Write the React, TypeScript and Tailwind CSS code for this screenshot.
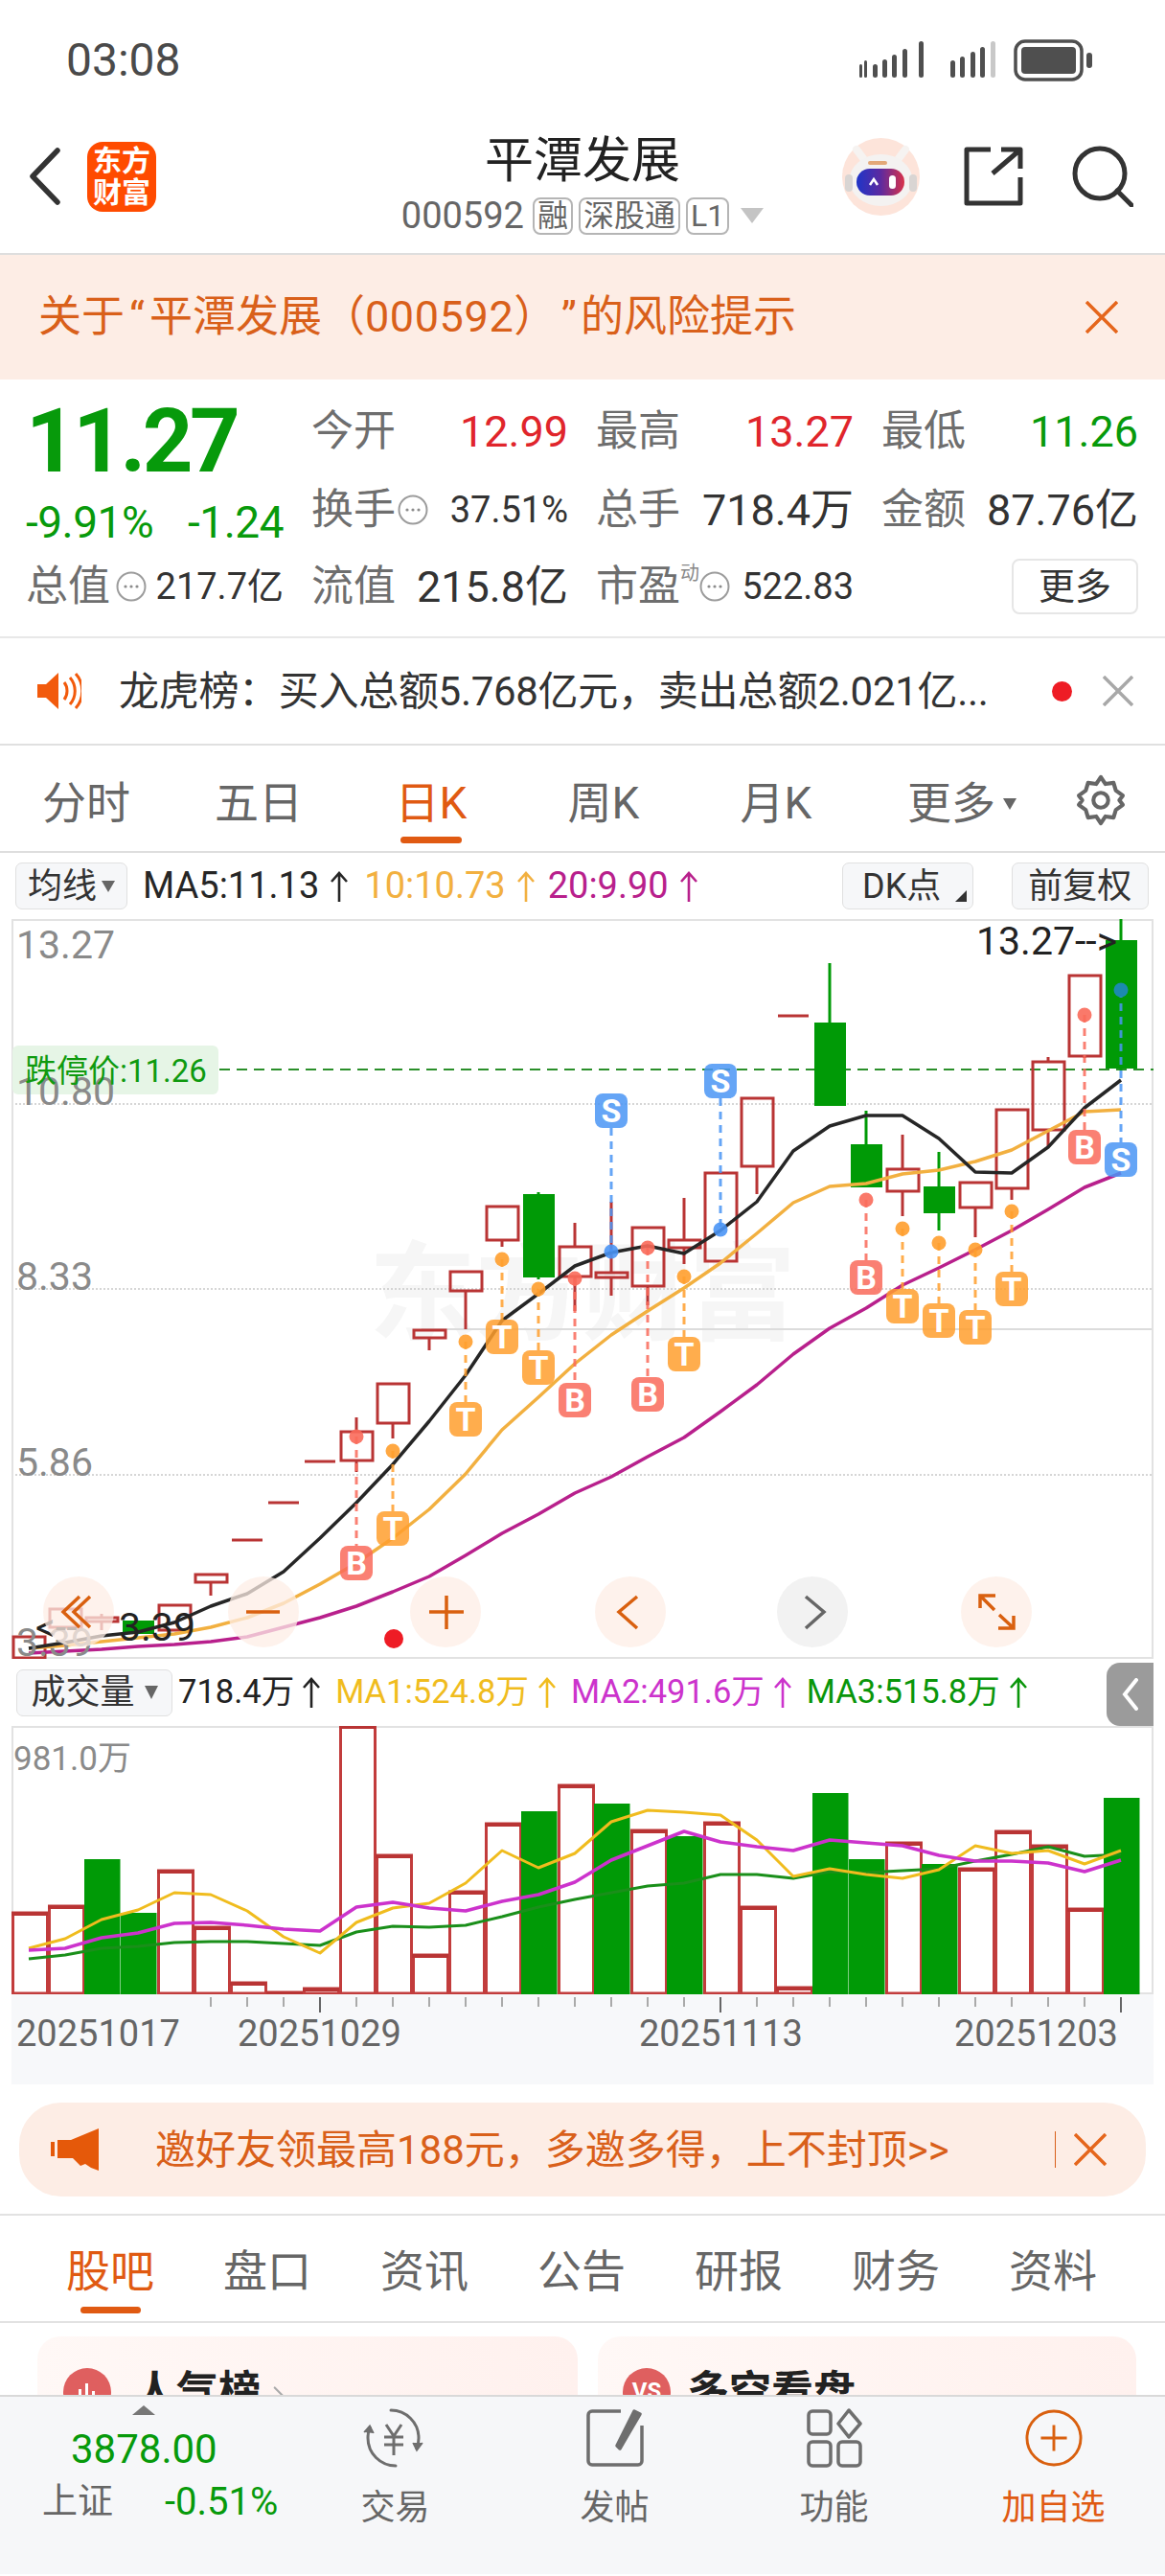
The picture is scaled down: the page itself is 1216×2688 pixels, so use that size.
import { ChevronRight } from 'lucide-react';

// candle x positions step 38px from 30, all chart coords are page coords
const cx = (i: number) => 30 + 38 * i;
const RED = '#b93434';
const GREEN = '#009a06';

const CANDLES: { up: boolean; top: number; bot: number; hi?: number; lo?: number }[] = [
  { up: true, top: 1710, bot: 1732, lo: 1735 },
  { up: true, top: 1681, bot: 1700 },
  { up: true, top: 1690, bot: 1694, lo: 1703, hi: 1686 },
  { up: false, top: 1693, bot: 1707 },
  { up: true, top: 1677, bot: 1703 },
  { up: true, top: 1645, bot: 1653, lo: 1667 },
  { up: true, top: 1609, bot: 1609 },
  { up: true, top: 1570, bot: 1570 },
  { up: true, top: 1527, bot: 1527 },
  { up: true, top: 1496, bot: 1526, hi: 1481, lo: 1538 },
  { up: true, top: 1446, bot: 1487, lo: 1503 },
  { up: true, top: 1390, bot: 1398, lo: 1411 },
  { up: true, top: 1329, bot: 1349, lo: 1389 },
  { up: true, top: 1261, bot: 1296, lo: 1303 },
  { up: false, top: 1248, bot: 1335, hi: 1246, lo: 1337 },
  { up: true, top: 1303, bot: 1334, hi: 1278, lo: 1370 },
  { up: true, top: 1330, bot: 1335, hi: 1256, lo: 1354 },
  { up: true, top: 1283, bot: 1344, lo: 1364 },
  { up: true, top: 1296, bot: 1304, hi: 1252, lo: 1321 },
  { up: true, top: 1226, bot: 1318 },
  { up: true, top: 1148, bot: 1219, lo: 1248 },
  { up: true, top: 1062, bot: 1062 },
  { up: false, top: 1069, bot: 1156, hi: 1007 },
  { up: false, top: 1196, bot: 1241, hi: 1161 },
  { up: true, top: 1222, bot: 1245, hi: 1186, lo: 1271 },
  { up: false, top: 1240, bot: 1268, hi: 1204, lo: 1286 },
  { up: true, top: 1236, bot: 1262, lo: 1293 },
  { up: true, top: 1160, bot: 1242, lo: 1254 },
  { up: true, top: 1110, bot: 1181, hi: 1105, lo: 1198 },
  { up: true, top: 1020, bot: 1104, lo: 1106 },
  { up: false, top: 983, bot: 1117, hi: 961, lo: 1119 },
];

const MA5 = [1722, 1716, 1709, 1705, 1695, 1678, 1665, 1642, 1607, 1570, 1530, 1485, 1437, 1380, 1352, 1323, 1309, 1302, 1310, 1286, 1256, 1203, 1177, 1166, 1166, 1190, 1225, 1226, 1199, 1158, 1129];
const MA10 = [1722, 1719, 1715, 1711, 1707, 1700, 1690, 1675, 1655, 1633, 1607, 1577, 1540, 1494, 1460, 1425, 1395, 1370, 1346, 1320, 1289, 1257, 1240, 1237, 1227, 1223, 1214, 1202, 1182, 1162, 1160];
const MA20 = [1727, 1725, 1723, 1720, 1718, 1715, 1710, 1700, 1690, 1678, 1663, 1647, 1625, 1602, 1582, 1560, 1543, 1522, 1502, 1475, 1447, 1415, 1388, 1367, 1343, 1325, 1306, 1286, 1264, 1241, 1226];

const BADGES: { i: number; k: 'T' | 'B' | 'S'; y: number; dot: number }[] = [
  { i: 9, k: 'B', y: 1633, dot: 1501 },
  { i: 10, k: 'T', y: 1597, dot: 1516 },
  { i: 12, k: 'T', y: 1483, dot: 1402 },
  { i: 13, k: 'T', y: 1397, dot: 1316 },
  { i: 14, k: 'T', y: 1429, dot: 1347 },
  { i: 15, k: 'B', y: 1463, dot: 1336 },
  { i: 16, k: 'S', y: 1161, dot: 1308 },
  { i: 17, k: 'B', y: 1457, dot: 1304 },
  { i: 18, k: 'T', y: 1415, dot: 1334 },
  { i: 19, k: 'S', y: 1130, dot: 1285 },
  { i: 23, k: 'B', y: 1335, dot: 1254 },
  { i: 24, k: 'T', y: 1365, dot: 1284 },
  { i: 25, k: 'T', y: 1380, dot: 1299 },
  { i: 26, k: 'T', y: 1387, dot: 1306 },
  { i: 27, k: 'T', y: 1347, dot: 1266 },
  { i: 29, k: 'B', y: 1199, dot: 1061 },
  { i: 30, k: 'S', y: 1212, dot: 1035 },
];
const BADGE_COLOR = { T: '#ff9f2e', B: '#f96a5a', S: '#4a95f5' };

const VOL: [number, boolean][] = [
  [1998, true], [1991, true], [1942, false], [1998, false], [1954, true], [2013, true], [2071, true], [2081, true],
  [2077, true], [1803, true], [1938, true], [2042, true], [1976, true], [1905, true], [1892, false], [1865, true],
  [1884, false], [1912, true], [1918, false], [1904, true], [1992, true], [2076, true], [1873, false], [1942, false],
  [1925, true], [1947, false], [1952, true], [1913, true], [1928, true], [1994, true], [1878, false],
];
const VMA1 = [2035, 2025, 2005, 1995, 1977, 1979, 1996, 2023, 2040, 2008, 1993, 1988, 1967, 1933, 1951, 1936, 1903, 1891, 1893, 1896, 1922, 1960, 1952, 1958, 1962, 1953, 1928, 1936, 1933, 1947, 1933];
const VMA2 = [2037, 2035, 2024, 2019, 2009, 2008, 2011, 2015, 2017, 1992, 1987, 1993, 1996, 1986, 1979, 1966, 1943, 1928, 1913, 1924, 1929, 1933, 1922, 1925, 1928, 1938, 1944, 1944, 1946, 1955, 1943];
const VMA3 = [2046, 2042, 2035, 2033, 2029, 2028, 2028, 2030, 2032, 2018, 2012, 2013, 2011, 2002, 1992, 1984, 1977, 1970, 1967, 1958, 1958, 1962, 1955, 1956, 1954, 1952, 1944, 1937, 1929, 1939, 1937];

const pts = (ys: number[]) => ys.map((y, i) => `${cx(i)},${y}`).join(' ');

function Up({ className }: { className: string }) {
  return (
    <svg viewBox="0 0 20 34" className={`inline-block h-[34px] w-[20px] ${className}`} fill="none" stroke="currentColor" strokeWidth="2.6">
      <path d="M10 33V3M2 12l8-9 8 9" />
    </svg>
  );
}

function Dots() {
  return (
    <svg viewBox="0 0 32 32" className="h-[32px] w-[32px] shrink-0" fill="none">
      <circle cx="16" cy="16" r="14.5" stroke="#9c9c9c" strokeWidth="2" />
      <circle cx="10" cy="16" r="1.6" fill="#8c8c8c" /><circle cx="16" cy="16" r="1.6" fill="#8c8c8c" /><circle cx="22" cy="16" r="1.6" fill="#8c8c8c" />
    </svg>
  );
}

function StatusIcons() {
  return (
    <svg viewBox="0 0 250 44" className="h-[44px] w-[250px]" fill="#4f4f4f">
      <rect x="0" y="26" width="3" height="14" rx="1.5" /><rect x="5" y="22" width="3" height="18" rx="1.5" />
      <rect x="14" y="26" width="5" height="14" rx="2.5" /><rect x="24" y="21" width="5" height="19" rx="2.5" />
      <rect x="34" y="16" width="5" height="24" rx="2.5" /><rect x="45" y="10" width="5" height="30" rx="2.5" />
      <rect x="58" y="2" width="5" height="38" rx="2.5" transform="translate(4 0)" />
      <rect x="95" y="22" width="5" height="18" rx="2.5" /><rect x="105" y="18" width="5" height="22" rx="2.5" />
      <rect x="116" y="13" width="5" height="27" rx="2.5" /><rect x="126" y="8" width="5" height="32" rx="2.5" />
      <rect x="137" y="2" width="5" height="38" rx="2.5" fill="#c8c8c8" />
      <rect x="163" y="2" width="69" height="40" rx="10" fill="none" stroke="#4f4f4f" strokeWidth="3.5" />
      <rect x="169" y="8" width="57" height="28" rx="4" />
      <rect x="237" y="14" width="6" height="16" rx="3" />
    </svg>
  );
}

function Robot() {
  return (
    <svg viewBox="0 0 81 81" className="h-[81px] w-[81px]">
      <defs>
        <linearGradient id="visor" x1="0" x2="1" y1="0" y2="0">
          <stop offset="0" stopColor="#1f35c8" /><stop offset="0.5" stopColor="#5c2aa0" /><stop offset="1" stopColor="#d8324a" />
        </linearGradient>
      </defs>
      <circle cx="40.5" cy="40.5" r="40.5" fill="#fde4da" />
      <path d="M15 12l9 12M66 12l-9 12" stroke="#f6f3f1" strokeWidth="8" strokeLinecap="round" />
      <ellipse cx="40.5" cy="44" rx="33" ry="27" fill="#f4f2f1" />
      <rect x="3" y="38" width="8" height="18" rx="4" fill="#d9d5d3" />
      <rect x="70" y="38" width="8" height="18" rx="4" fill="#d9d5d3" />
      <rect x="27" y="24" width="20" height="4" rx="2" fill="#e3a878" />
      <rect x="15" y="32" width="50" height="28" rx="14" fill="url(#visor)" />
      <path d="M29 49l4-6 4 6" stroke="#fff" strokeWidth="2.5" fill="none" />
      <rect x="49" y="39" width="7" height="14" rx="3.5" fill="#fff" />
    </svg>
  );
}

function Speaker() {
  return (
    <svg viewBox="0 0 48 40" className="h-[40px] w-[48px]" fill="#f25a0c">
      <path d="M2 13h9L24 1v38L11 27H2z" />
      <path d="M30 11c4 5 4 13 0 18M36 6c7 8 7 20 0 28M42 2c9 10 9 26 0 36" fill="none" stroke="#f25a0c" strokeWidth="3" />
    </svg>
  );
}

function Horn() {
  return (
    <svg viewBox="0 0 50 44" className="h-[44px] w-[50px]" fill="#e5590a">
      <rect x="0" y="14" width="4" height="15" />
      <path d="M7 12h14L50 0v44l-8-3-6-4-5 2-8-8H7z" />
    </svg>
  );
}

function Tag({ children }: { children: string }) {
  return <span className="flex h-[39px] items-center rounded-[8px] border-2 border-[#b5b5b5] px-[3px] text-[32px] text-[#666]">{children}</span>;
}

function Stat({ label, value, cls = 'text-[#333]', mid, size = 'text-[45px]' }: { label: string; value: string; cls?: string; mid?: any; size?: string }) {
  return (
    <div className="flex items-center justify-between leading-none">
      <div className="flex items-center">
        <span className="text-[44px] text-[#6e6e6e]">{label}</span>
        {mid}
      </div>
      <span className={`${size} ${cls}`}>{value}</span>
    </div>
  );
}

function MainChart() {
  return (
    <svg viewBox="12 961 1192 772" className="block h-[772px] w-[1192px] ml-[12px]" fill="none">
      <text x="385" y="1392" fontSize="112" fontWeight="700" fill="#f6f6f6" textLength="446">东方财富</text>
      {[1154, 1347, 1541].map((y) => (
        <line key={y} x1="12" x2="1204" y1={y} y2={y} stroke="#c9c9c9" strokeWidth="1.5" strokeDasharray="2 2" />
      ))}
      <line x1="440" x2="1204" y1="1389" y2="1389" stroke="#dcdcdc" strokeWidth="2" />
      <rect x="13" y="962" width="1190" height="770" stroke="#e2e2e2" strokeWidth="2" />
      <line x1="229" x2="1204" y1="1118" y2="1118" stroke="#2a8f2a" strokeWidth="2" strokeDasharray="11 7" />
      <rect x="13" y="1093" width="215" height="51" rx="6" fill="#e6f5e6" />

      {CANDLES.map((c, i) => {
        const x = cx(i);
        const color = c.up ? RED : GREEN;
        return (
          <g key={i}>
            {c.hi && <line x1={x} x2={x} y1={c.hi} y2={c.top} stroke={color} strokeWidth="3" />}
            {c.lo && <line x1={x} x2={x} y1={c.bot} y2={c.lo} stroke={color} strokeWidth="3" />}
            {c.top === c.bot ? (
              <line x1={x - 16} x2={x + 16} y1={c.top} y2={c.top} stroke={color} strokeWidth="3" />
            ) : c.up ? (
              <rect x={x - 16} y={c.top} width="33" height={c.bot - c.top} stroke={color} strokeWidth="3" />
            ) : (
              <rect x={x - 16} y={c.top} width="33" height={c.bot - c.top} fill={color} />
            )}
          </g>
        );
      })}

      <polyline points={pts(MA20)} stroke="#b8208c" strokeWidth="3.5" strokeLinejoin="round" />
      <polyline points={pts(MA10)} stroke="#f2b040" strokeWidth="3.5" strokeLinejoin="round" />
      <polyline points={pts(MA5)} stroke="#262626" strokeWidth="3.5" strokeLinejoin="round" />

      {BADGES.map((b) => {
        const x = cx(b.i);
        const color = BADGE_COLOR[b.k];
        const from = b.dot < b.y ? b.dot : b.y + 18;
        const to = b.dot < b.y ? b.y - 18 : b.dot;
        return (
          <g key={b.i}>
            <line x1={x} x2={x} y1={from} y2={to} stroke={color} strokeOpacity="0.85" strokeWidth="3" strokeDasharray="8 6" />
            <circle cx={x} cy={b.dot} r="7.5" fill={b.i === 30 ? '#1c8ab0' : color} fillOpacity={b.i === 30 ? 1 : 0.9} />
            <rect x={x - 17} y={b.y - 18} width="34" height="36" rx="8" fill={color} fillOpacity="0.85" />
            <text x={x} y={b.y + 12} textAnchor="middle" fontSize="34" fontWeight="700" fill="#fff">{b.k}</text>
          </g>
        );
      })}

      <text x="17" y="1002" fontSize="41" fill="#8a8a8a">13.27</text>
      <text x="17" y="1155" fontSize="41" fill="#8a8a8a">10.80</text>
      <text x="17" y="1348" fontSize="41" fill="#8a8a8a">8.33</text>
      <text x="17" y="1542" fontSize="41" fill="#8a8a8a">5.86</text>
      <text x="17" y="1730" fontSize="41" fill="#8a8a8a">3.39</text>
      <text x="26" y="1131" fontSize="33" fill="#0f9a0f">跌停价:11.26</text>
      <text x="1019" y="998" fontSize="41" fill="#222">13.27--&gt;</text>
      <text y="1714" fontSize="41" fill="#222"><tspan x="37">&lt;--</tspan><tspan x="124">3.39</tspan></text>

      <ellipse cx="411" cy="1712" rx="10" ry="10" fill="#ee1c25" />
      {[82, 275, 465, 658, 1040].map((x) => (
        <circle key={x} cx={x} cy="1684" r="37" fill="#fdeee6" fillOpacity="0.75" />
      ))}
      <circle cx="848" cy="1684" r="37" fill="#f2f2f2" />
      <g stroke="#d9600f" strokeWidth="3.5">
        <path d="M83 1668l-17 16 17 16M94 1668l-17 16 17 16" />
        <path d="M257 1684h35" />
        <path d="M448 1684h36M466 1667v35" />
        <path d="M665 1668l-19 16 19 17" />
        <path d="M1038 1682l-15-15M1023 1680v-13h16M1043 1687l15 14M1058 1688v13h-16" />
      </g>
      <path d="M841 1668l19 16-19 17" stroke="#666" strokeWidth="3.5" />
    </svg>
  );
}

function VolumeChart() {
  return (
    <svg viewBox="12 1803 1192 280" className="block h-[280px] w-[1192px] ml-[12px]" fill="none">
      <rect x="13" y="1804" width="1190" height="278" stroke="#e2e2e2" strokeWidth="2" />
      {VOL.map(([top, up], i) => {
        const x = 12 + 38 * i;
        return up ? (
          <g key={i}>
            <rect x={x + 1.5} y={top} width="36" height={2083 - top - 1} fill="#fff" stroke="#c23c3c" strokeWidth="3" />
            <line x1={x} x2={x + 38} y1={top + 1} y2={top + 1} stroke="#b93434" strokeWidth="4" />
          </g>
        ) : (
          <rect key={i} x={x} y={top} width="37.5" height={2083 - top} fill={GREEN} />
        );
      })}
      <polyline points={pts(VMA3)} stroke="#1a8f1a" strokeWidth="3" strokeLinejoin="round" />
      <polyline points={pts(VMA1)} stroke="#f0bc1e" strokeWidth="3" strokeLinejoin="round" />
      <polyline points={pts(VMA2)} stroke="#cc33cc" strokeWidth="3.5" strokeLinejoin="round" />
      <text x="14" y="1849" fontSize="35" fill="#8a8a8a">981.0万</text>
    </svg>
  );
}

function DateAxis() {
  return (
    <svg viewBox="12 2083 1192 94" className="block h-[94px] w-[1192px]" fill="none">
      {CANDLES.map((_, i) =>
        i >= 5 ? (
          <line key={i} x1={cx(i)} x2={cx(i)} y1="2086" y2={i === 8 || i === 19 || i === 30 ? 2102 : 2096} stroke={i === 8 || i === 19 || i === 30 ? '#666' : '#aaa'} strokeWidth="2" />
        ) : null,
      )}
      <g fontSize="38" fill="#666">
        <text x="17" y="2137">20251017</text>
        <text x="248" y="2137">20251029</text>
        <text x="667" y="2137">20251113</text>
        <text x="996" y="2137">20251203</text>
      </g>
    </svg>
  );
}

export default function App() {
  return (
    <div className="h-[2688px] w-[1216px] overflow-hidden bg-white font-[Roboto,'Noto_Sans_CJK_SC',sans-serif]">
      {/* status bar */}
      <div className="flex h-[122px] items-center justify-between pt-[3px] pl-[69px] pr-[69px]">
        <span className="text-[48px] text-[#4a4a4a]">03:08</span>
        <StatusIcons />
      </div>

      {/* header */}
      <div className="grid h-[144px] grid-cols-[1fr_auto_1fr] border-b-2 border-[#dedede]">
        <div className="flex items-center pb-[18px] pl-[30px]">
          <svg viewBox="0 0 34 60" className="h-[60px] w-[34px]" fill="none" stroke="#333" strokeWidth="5.5" strokeLinecap="round" strokeLinejoin="round">
            <path d="M30 3L4 30l26 27" />
          </svg>
          <div className="ml-[27px] flex h-[73px] w-[72px] flex-col items-center justify-center rounded-[16px] bg-[#ff4b00] text-[30px] font-bold leading-[33px] text-white">
            <span>东方</span>
            <span>财富</span>
          </div>
        </div>
        <div className="flex flex-col items-center pt-[16px]">
          <span className="text-[51px] leading-[60px] text-[#222]">平潭发展</span>
          <div className="mt-[7px] flex items-center gap-[6px]">
            <span className="mr-[3px] text-[38px] leading-[40px] text-[#666]">000592</span>
            <Tag>融</Tag>
            <Tag>深股通</Tag>
            <Tag>L1</Tag>
            <svg viewBox="0 0 24 16" className="ml-[6px] h-[16px] w-[24px]" fill="#c4c4c4"><path d="M0 0h24L12 16z" /></svg>
          </div>
        </div>
        <div className="flex items-center justify-end pb-[18px] pr-[33px]">
          <Robot />
          <svg viewBox="0 0 62 62" className="ml-[46px] h-[62px] w-[62px]" fill="none" stroke="#333" strokeWidth="5" strokeLinejoin="round">
            <path d="M28 3H3v56h56V32" />
            <path d="M30 28L58 4M39 3h20v20" />
          </svg>
          <svg viewBox="0 0 64 64" className="ml-[51px] h-[64px] w-[64px]" fill="none" stroke="#333" strokeWidth="5" strokeLinecap="round">
            <circle cx="29" cy="29" r="26" />
            <path d="M47 47l15 15" />
          </svg>
        </div>
      </div>

      {/* risk banner */}
      <div className="flex h-[130px] items-center justify-between bg-[#fdede5] pl-[40px] pr-[49px] text-[#d9601a]">
        <span className="text-[45px]">
          关于<span className="px-[5px]">“</span>平潭发展（<span className="tracking-[0.6px]">000592</span>）<span className="ml-[27px] pr-[4px]">”</span>的风险提示
        </span>
        <svg viewBox="0 0 34 34" className="h-[34px] w-[34px]" fill="none" stroke="#e5661c" strokeWidth="3.5"><path d="M1 1l32 32M33 1L1 33" /></svg>
      </div>

      {/* quote */}
      <div className="grid h-[270px] grid-cols-[269px_268px_269px_268px] grid-rows-[108px_56px_104px] gap-x-[29px] border-b-2 border-[#e8e8e8] pl-[27px]">
        <div className="row-span-2 flex flex-col">
          <span className="mt-[15px] text-[92px] font-bold leading-[100px] tracking-[-3.5px] text-[#079a0b]">11.27</span>
          <div className="mt-[9px] flex items-center justify-between text-[46px] leading-[50px] tracking-[-0.5px] text-[#079a0b]">
            <span>-9.91%</span>
            <span>-1.24</span>
          </div>
        </div>
        <Stat label="今开" value="12.99" cls="text-[#e0252b]" />
        <Stat label="最高" value="13.27" cls="text-[#e0252b]" />
        <Stat label="最低" value="11.26" cls="text-[#079a0b]" />
        <Stat label="换手" value="37.51%" size="text-[38px]" mid={<span className="ml-[2px]"><Dots /></span>} />
        <Stat label="总手" value="718.4万" />
        <Stat label="金额" value="87.76亿" />
        <Stat label="总值" value="217.7亿" size="text-[38px]" mid={<span className="ml-[6px]"><Dots /></span>} />
        <Stat label="流值" value="215.8亿" />
        <Stat
          label="市盈"
          value="522.83"
          size="text-[38px]"
          mid={
            <span className="flex items-center">
              <span className="-mt-[28px] text-[20px] leading-[24px] text-[#888]">动</span>
              <Dots />
            </span>
          }
        />
        <div className="flex items-center justify-end">
          <button className="flex h-[58px] w-[132px] items-center justify-center rounded-[8px] border-2 border-[#e6e6e6] text-[38px] text-[#333]">更多</button>
        </div>
      </div>

      {/* news ticker */}
      <div className="flex h-[112px] items-center border-b-2 border-[#e0e0e0] pl-[37px]">
        <Speaker />
        <span className="ml-[39px] w-[912px] whitespace-nowrap text-[42px] tracking-[-0.3px] text-[#333]">龙虎榜：买入总额5.768亿元，卖出总额2.021亿...</span>
        <span className="ml-[62px] h-[21px] w-[21px] rounded-full bg-[#ee1c25]" />
        <svg viewBox="0 0 32 32" className="ml-[32px] h-[32px] w-[32px]" fill="none" stroke="#a8a8a8" strokeWidth="3.5"><path d="M1 1l30 30M31 1L1 31" /></svg>
      </div>

      {/* period tabs */}
      <div className="flex h-[112px] items-start border-b-2 border-[#dedede] text-[46px] text-[#666]">
        {['分时', '五日', '日K', '周K', '月K'].map((t) => (
          <div key={t} className="relative flex h-[110px] w-[180px] justify-center pt-[26px]">
            <span className={t === '日K' ? 'text-[#e05a12]' : ''}>{t}</span>
            {t === '日K' && <span className="absolute bottom-[8px] h-[7px] w-[64px] rounded-full bg-[#e05a12]" />}
          </div>
        ))}
        <div className="flex w-[180px] items-center justify-center pl-[28px] pt-[26px]">
          <span>更多</span>
          <svg viewBox="0 0 14 12" className="ml-[8px] h-[12px] w-[14px]" fill="#666"><path d="M0 0h14L7 12z" /></svg>
        </div>
        <svg viewBox="0 0 24 24" className="ml-[40px] mt-[28px] h-[58px] w-[58px]" fill="none" stroke="#666" strokeWidth="1.7" strokeLinejoin="round">
          <path d="M12 2l2 3 3.5-.5 1 3.3L21.5 10l-1.5 2 1.5 2-3 2.2-1 3.3-3.5-.5-2 3-2-3-3.5.5-1-3.3L2.5 14 4 12l-1.500-2 3-2.200 1-3.300L10 5z" />
          <circle cx="12" cy="12" r="3.200" />
        </svg>
      </div>

      {/* MA legend */}
      <div className="flex h-[69px] items-center pl-[16px] text-[38px]">
        <div className="flex h-[49px] w-[117px] items-center justify-center rounded-[7px] border border-[#e0e0e0] bg-[#f6f7f9] text-[36px] text-[#333]">
          均线
          <svg viewBox="0 0 14 12" className="ml-[5px] h-[12px] w-[14px]" fill="#666"><path d="M0 0h14L7 12z" /></svg>
        </div>
        <span className="ml-[16px] text-[#262626]">MA5:11.13</span>
        <Up className="ml-[11px] text-[#262626]" />
        <span className="ml-[16px] text-[#f2b040]">10:10.73</span>
        <Up className="ml-[11px] text-[#f2b040]" />
        <span className="ml-[13px] text-[#b8208c]">20:9.90</span>
        <Up className="ml-[11px] text-[#b8208c]" />
        <div className="relative ml-[150px] flex h-[49px] w-[137px] items-center justify-center rounded-[7px] border border-[#e0e0e0] bg-[#f6f7f9] pr-[12px] text-[36px] text-[#333]">
          DK点
          <svg viewBox="0 0 12 12" className="absolute bottom-[7px] right-[6px] h-[12px] w-[12px]" fill="#333"><path d="M12 0v12H0z" /></svg>
        </div>
        <div className="ml-[40px] flex h-[49px] w-[143px] items-center justify-center rounded-[7px] border border-[#e0e0e0] bg-[#f6f7f9] text-[36px] text-[#333]">前复权</div>
      </div>

      <MainChart />

      {/* volume legend */}
      <div className="flex h-[70px] items-center pl-[17px] pr-[12px] text-[34.5px]">
        <div className="flex h-[49px] w-[163px] items-center justify-center rounded-[7px] border border-[#e0e0e0] bg-[#f6f7f9] text-[36px] text-[#333]">
          成交量
          <svg viewBox="0 0 14 14" className="ml-[10px] h-[14px] w-[14px]" fill="#666"><path d="M0 0h14L7 14z" /></svg>
        </div>
        <span className="ml-[6px] text-[#222]">718.4万</span>
        <Up className="ml-[8px] text-[#222]" />
        <span className="ml-[15px] text-[#f0bc1e]">MA1:524.8万</span>
        <Up className="ml-[9px] text-[#f0bc1e]" />
        <span className="ml-[15px] text-[#cc33cc]">MA2:491.6万</span>
        <Up className="ml-[9px] text-[#cc33cc]" />
        <span className="ml-[15px] text-[#0a960a]">MA3:515.8万</span>
        <Up className="ml-[9px] text-[#0a960a]" />
        <div className="ml-auto flex h-[66px] w-[49px] items-center justify-center self-end rounded-l-[14px] bg-[#9b9b9b]">
          <svg viewBox="0 0 18 34" className="h-[34px] w-[18px]" fill="none" stroke="#fff" strokeWidth="4" strokeLinecap="round"><path d="M15 2L3 17l12 15" /></svg>
        </div>
      </div>

      <VolumeChart />

      <div className="ml-[12px] h-[94px] w-[1192px] bg-[#f7f8fa]">
        <DateAxis />
      </div>

      {/* promo */}
      <div className="px-[20px] pt-[19px]">
        <div className="flex h-[98px] items-center rounded-[44px] bg-[#fdede5] pl-[33px]">
          <Horn />
          <span className="ml-[59px] w-[939px] whitespace-nowrap text-[42px] text-[#d9601a]">邀好友领最高188元，多邀多得，上不封顶&gt;&gt;</span>
          <span className="h-[38px] w-[1px] bg-[#d9601a]" />
          <svg viewBox="0 0 34 34" className="ml-[19px] h-[34px] w-[34px]" fill="none" stroke="#e5661c" strokeWidth="3.5"><path d="M1 1l32 32M33 1L1 33" /></svg>
        </div>
      </div>
      <div className="h-[20px] border-b-2 border-[#e2e2e2]" />

      {/* info tabs */}
      <div className="flex h-[112px] items-start border-b-2 border-[#e2e2e2] pl-[33px] text-[46px] text-[#666]">
        {['股吧', '盘口', '资讯', '公告', '研报', '财务', '资料'].map((t, i) => (
          <div key={t} className="relative flex h-[110px] w-[164px] justify-center pt-[24px]">
            <span className={i === 0 ? 'text-[#e05a12]' : ''}>{t}</span>
            {i === 0 && <span className="absolute bottom-[8px] h-[7px] w-[63px] rounded-full bg-[#e05a12]" />}
          </div>
        ))}
      </div>

      {/* cards, cut off by the bottom bar */}
      <div className="flex h-[75px] gap-[21px] overflow-hidden pl-[39px] pr-[30px] pt-[14px]">
        <div className="flex h-[160px] w-[564px] items-start rounded-[24px] bg-gradient-to-r from-[#fff8f6] to-[#fff1ee] pl-[27px] pt-[19px]">
          <span className="mt-[14px] flex h-[50px] w-[50px] items-start justify-center rounded-full bg-[#df5f5f]">
            <svg viewBox="0 0 24 16" className="mt-[14px] h-[16px] w-[24px]" fill="#fff"><path d="M3 8h3v8H3zM10 2h3v14h-3zM17 10h3v6h-3z" /></svg>
          </span>
          <span className="ml-[24px] mt-[14px] text-[44px] font-bold leading-[50px] text-[#222]">人气榜</span>
          <ChevronRight className="ml-[2px] mt-[26px] h-[34px] w-[34px] text-[#aaa]" strokeWidth={1.5} />
        </div>
        <div className="flex h-[160px] w-[562px] items-start rounded-[24px] bg-gradient-to-r from-[#fff8f6] to-[#fff1ee] pl-[26px] pt-[19px]">
          <span className="mt-[14px] flex h-[50px] w-[50px] items-start justify-center rounded-full bg-[#df5f5f] pt-[10px] text-[24px] font-bold leading-[28px] text-white">VS</span>
          <span className="ml-[17px] mt-[14px] text-[44px] font-bold leading-[50px] text-[#222]">多空看盘</span>
        </div>
      </div>

      {/* bottom bar */}
      <div className="flex h-[187px] border-t-2 border-[#d9d9d9] bg-[#f6f7f9]">
        <div className="flex w-[298px] flex-col pl-[44px] pt-[9px]">
          <svg viewBox="0 0 24 10" className="ml-[94px] h-[10px] w-[24px]" fill="#777"><path d="M12 0l12 10H0z" /></svg>
          <span className="ml-[30px] mt-[11px] text-[42px] leading-[50px] text-[#079a0b]">3878.00</span>
          <div className="mt-[5px] flex items-center">
            <span className="text-[37px] leading-[50px] text-[#666]">上证</span>
            <span className="ml-[54px] text-[40px] leading-[50px] text-[#079a0b]">-0.51%</span>
          </div>
        </div>

        <div className="flex w-[229px] flex-col items-center pt-[12px] text-[36px] text-[#666]">
          <svg viewBox="0 0 72 62" className="h-[62px] w-[72px]" fill="none" stroke="#6e6e6e" strokeWidth="3">
            <path d="M31 2A29 29 0 0 1 60 31c0 4-.800 8-2 11M36 60A29 29 0 0 1 7 31c0-4 .800-8 2-11" strokeLinecap="round" />
            <path d="M3 25l6-7 4 8M64 36l-6 8-4-8" fill="#6e6e6e" strokeWidth="1.500" />
            <path d="M26 17l8 12 8-12M24 30h20M24 38h20M34 29v20" />
          </svg>
          <span className="mt-[15px]">交易</span>
        </div>

        <div className="flex w-[229px] flex-col items-center pt-[12px] text-[36px] text-[#666]">
          <svg viewBox="0 0 60 62" className="h-[62px] w-[60px]" fill="none" stroke="#6e6e6e" strokeWidth="3.500" strokeLinejoin="round">
            <path d="M36 3H6a4 4 0 0 0-4 4v48a4 4 0 0 0 4 4h48a4 4 0 0 0 4-4V18" />
            <path d="M50 3l6 3-21 36-3-3z" fill="#6e6e6e" />
          </svg>
          <span className="mt-[15px]">发帖</span>
        </div>

        <div className="flex w-[229px] flex-col items-center pt-[12px] text-[36px] text-[#666]">
          <svg viewBox="0 0 58 62" className="h-[62px] w-[58px]" fill="none" stroke="#6e6e6e" strokeWidth="3.500" strokeLinejoin="round">
            <rect x="2" y="3" width="23" height="24" rx="4" />
            <rect x="2" y="35" width="23" height="25" rx="4" />
            <rect x="33" y="35" width="23" height="25" rx="4" />
            <path d="M44 2l12 14-12 14-11-14z" />
          </svg>
          <span className="mt-[15px]">功能</span>
        </div>

        <div className="flex w-[229px] flex-col items-center pt-[12px] text-[36px] text-[#e05a12]">
          <svg viewBox="0 0 62 62" className="h-[62px] w-[60px]" fill="none" stroke="#d9600f" strokeWidth="3">
            <circle cx="31" cy="31" r="29" />
            <path d="M17 31h28M31 17v28" />
          </svg>
          <span className="mt-[15px]">加自选</span>
        </div>
      </div>
    </div>
  );
}
